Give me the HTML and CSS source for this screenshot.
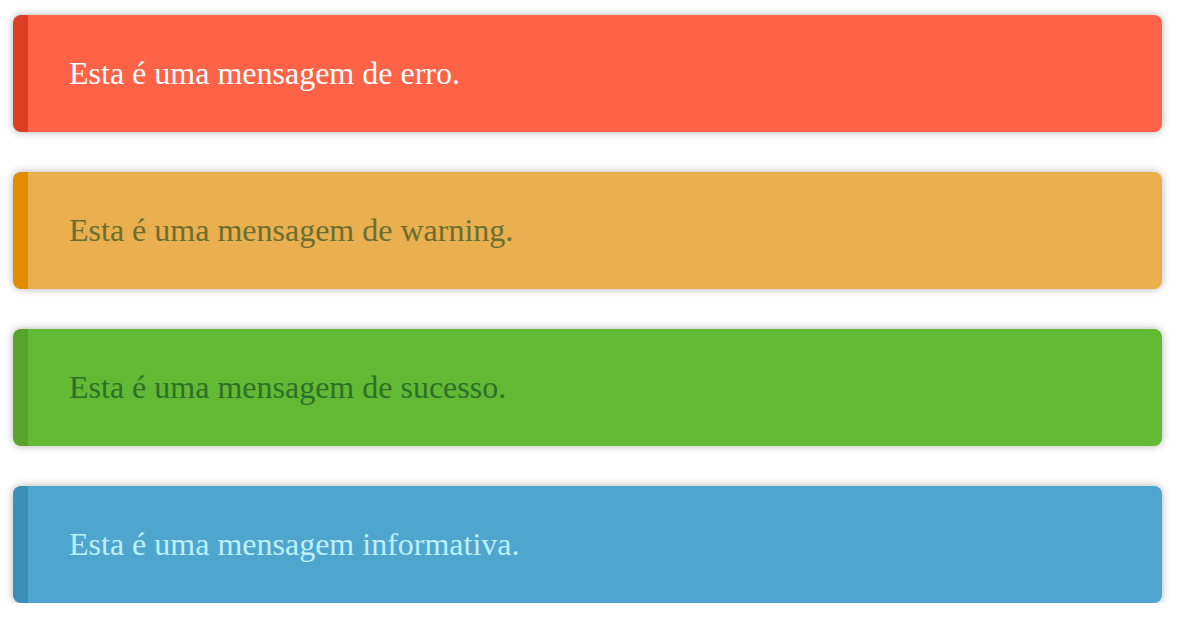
FILE: index.html
```html
<!DOCTYPE html>
<html>
<head>
<meta charset="utf-8">
<link rel="stylesheet" href="styles.css">
</head>
<body>
<div class="list">
  <div class="msg error">Esta é uma mensagem de erro.</div>
  <div class="msg warning">Esta é uma mensagem de warning.</div>
  <div class="msg success">Esta é uma mensagem de sucesso.</div>
  <div class="msg info">Esta é uma mensagem informativa.</div>
</div>
</body>
</html>
```
FILE: styles.css
```css
html, body { margin: 0; background: #fff; }
.list {
  display: flex;
  flex-direction: column;
  gap: 40px;
  padding: 15px 17px 0 13px;
}
.msg {
  font-family: "Liberation Serif", "Times New Roman", serif;
  font-size: 32px;
  line-height: 37px;
  padding: 40px 40px 40px 41px;
  border-left: 15px solid;
  border-radius: 8px;
  box-shadow: 0 0 8px rgba(0,0,0,0.3);
}
.error { background: #ff6347; border-color: #dd3f25; color: #ffffff; }
.warning { background: #eaaf4f; border-color: #e28c00; color: #6b6e2f; }
.success { background: #62b933; border-color: #5aa32c; color: #2e7028; }
.info { background: #4ea5ce; border-color: #3a8fb7; color: #bcf1ff; }
```
